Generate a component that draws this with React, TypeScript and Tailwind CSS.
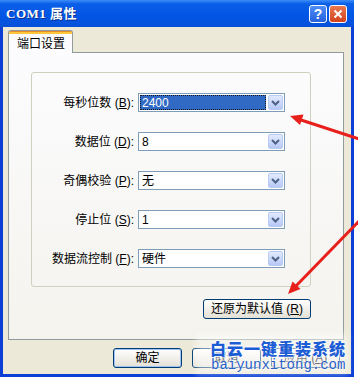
const rows = [
  { label: "每秒位数", key: "B", value: "2400", selected: true },
  { label: "数据位", key: "D", value: "8" },
  { label: "奇偶校验", key: "P", value: "无" },
  { label: "停止位", key: "S", value: "1" },
  { label: "数据流控制", key: "F", value: "硬件" },
];

function Chevron() {
  return (
    <svg width="9" height="6" viewBox="0 0 9 6">
      <path d="M1 1 L4.5 4.5 L8 1" fill="none" stroke="#4d6185" strokeWidth="2" />
    </svg>
  );
}

function Combo({ value, selected }: { value: string; selected?: boolean }) {
  return (
    <div className="w-[147px] h-[19px] border border-[#7f9db9] bg-white flex p-[1px]">
      <div
        className={`flex-1 flex items-center pl-[2px] text-[12px] leading-none ${
          selected
            ? "bg-[#316ac5] text-white outline outline-1 outline-dotted outline-[#1a1a1a] -outline-offset-1"
            : "text-black"
        }`}
      >
        {value}
      </div>
      <div className="w-[15px] ml-[2px] rounded-[2px] border border-[#b9cbf3] bg-linear-to-b from-[#e2eafe] to-[#b6c8f6] flex items-center justify-center">
        <Chevron />
      </div>
    </div>
  );
}

function XpButton({ children, focus }: { children: React.ReactNode; focus?: boolean }) {
  return (
    <div
      className={`h-[20px] rounded-[3px] border border-[#003c74] bg-linear-to-b from-[#ffffff] to-[#e3e0d5] flex items-center justify-center text-[12px] text-black ${
        focus ? "shadow-[inset_0_0_0_1px_#9fc1f5]" : ""
      }`}
    >
      {children}
    </div>
  );
}

export default function App() {
  return (
    <div className="relative w-[358px] h-[382px] bg-white overflow-hidden font-['Liberation_Sans','Noto_Sans_CJK_SC',sans-serif]">
      <div className="w-[354px] h-[377px] flex flex-col bg-[#0b3fd6]">
        {/* title bar */}
        <div className="h-[27px] flex items-center pl-[6px] pr-[7px] bg-[linear-gradient(180deg,#3d8ef8_0%,#0a5fe8_14%,#0256e6_55%,#0650d9_100%)]">
          <span className="text-white font-bold text-[13px] font-['Liberation_Serif','Noto_Sans_CJK_SC',serif] tracking-[0.5px] [text-shadow:1px_1px_0_#0a2f8a]">
            COM1 属性
          </span>
          <div className="ml-auto flex gap-[2px]">
            <div className="w-[18px] h-[18px] rounded-[3px] border border-white bg-linear-to-b from-[#4f8ef7] to-[#2660dc] flex items-center justify-center text-white font-bold text-[14px] leading-none">
              ?
            </div>
            <div className="w-[18px] h-[18px] rounded-[3px] border border-white bg-linear-to-b from-[#e9774f] to-[#d2411c] flex items-center justify-center">
              <svg width="10" height="10" viewBox="0 0 10 10">
                <path d="M1.5 1.5 L8.5 8.5 M8.5 1.5 L1.5 8.5" stroke="#fff" strokeWidth="2" />
              </svg>
            </div>
          </div>
        </div>

        {/* body */}
        <div className="flex-1 mx-[3px] mb-[3px] bg-[#ece9d8] flex flex-col pl-[5px] pr-[7px] pt-[3px]">
          {/* tab strip */}
          <div className="flex">
            <div className="relative z-10 -mb-[1px] w-[65px] h-[23px] rounded-t-[3px] border border-b-0 border-[#919b9c] bg-[#fcfcfe] overflow-hidden flex flex-col">
              <div className="h-[1px] bg-[#e68b2c]" />
              <div className="h-[2px] bg-[#ffc83c]" />
              <div className="flex-1 flex items-center pl-[8px] text-[12px] text-black">端口设置</div>
            </div>
          </div>

          {/* tab panel */}
          <div className="h-[288px] border border-[#919b9c] bg-linear-to-b from-[#fcfcfe] to-[#f4f3ee] pl-[22px] pt-[19px] pr-[32px] flex flex-col">
            <div className="w-[280px] h-[215px] rounded-[3px] border border-[#d0d0bf] pt-[20px] flex flex-col gap-[20px]">
              {rows.map((r) => (
                <div key={r.key} className="flex items-center">
                  <div className="w-[102px] text-right text-[12px] text-black whitespace-nowrap">
                    {r.label} (<span className="underline">{r.key}</span>):
                  </div>
                  <div className="ml-[4px]">
                    <Combo value={r.value} selected={r.selected} />
                  </div>
                </div>
              ))}
            </div>
            <div className="mt-[12px] flex justify-end">
              <div className="w-[108px]">
                <XpButton>
                  还原为默认值 (<span className="underline">R</span>)
                </XpButton>
              </div>
            </div>
          </div>

          {/* dialog buttons */}
          <div className="mt-[8px] flex justify-end gap-[10px] pr-[4px]">
            <div className="w-[69px]">
              <XpButton focus>确定</XpButton>
            </div>
            <div className="w-[69px]">
              <XpButton>取消</XpButton>
            </div>
            <div className="w-[69px]">
              <XpButton>
                应用 (<span className="underline">A</span>)
              </XpButton>
            </div>
          </div>
        </div>
      </div>

      {/* annotation arrows */}
      <svg className="absolute inset-0 pointer-events-none" width="358" height="382">
        <line x1="362" y1="140" x2="298" y2="119" stroke="#e8201c" strokeWidth="3" />
        <polygon points="290,116 303.5,114.5 300,125" fill="#e8201c" />
        <line x1="362" y1="218" x2="295" y2="287" stroke="#e8201c" strokeWidth="3" />
        <polygon points="288,294 300.5,289 292.5,281.5" fill="#e8201c" />
      </svg>

      {/* watermark */}
      <div className="absolute left-[196px] top-[334px] w-[152px] h-[40px] bg-white/45 blur-[3px] pointer-events-none" />
      <div className="absolute left-[210px] top-[339px] flex flex-col items-start pointer-events-none">
        <span className="text-[16px] leading-[19px] font-black tracking-[1px] text-[#1c5cd4] font-['Noto_Sans_CJK_SC',sans-serif] [text-shadow:0_0_2px_#fff,0_0_2px_#fff,0_0_3px_#fff]">
          白云一键重装系统
        </span>
        <span className="ml-[1px] text-[14px] leading-[14px] text-[#2a5fc4] font-['Liberation_Mono',monospace] [text-shadow:0_0_2px_#fff,0_0_2px_#fff]">
          baiyunxitong.com
        </span>
      </div>
    </div>
  );
}
